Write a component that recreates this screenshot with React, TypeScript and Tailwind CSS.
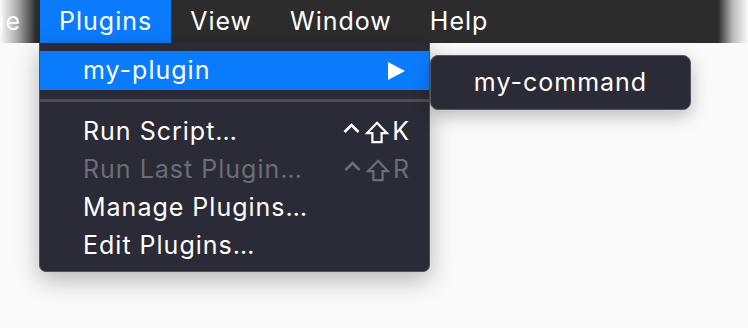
import React from 'react';

const font = { fontFamily: 'Inter, "Noto Sans", "DejaVu Sans", sans-serif' };

// control + shift modifier symbols, then the key letter
const Shortcut = ({ keyName }: { keyName: string }) => (
  <span className="flex items-center tracking-normal">
    <svg width="17" height="10" viewBox="0 0 17 10" className="mb-[9px] mr-[5px]">
      <path d="M1.5 9 L8.5 2 L15.5 9" fill="none" stroke="currentColor" strokeWidth="2.6" />
    </svg>
    <svg width="24" height="23" viewBox="0 0 24 23" className="mr-[3px]">
      <path d="M12 1.8 L22 12.2 H16.6 V21.2 H7.4 V12.2 H2 Z" fill="none" stroke="currentColor" strokeWidth="2.2" strokeLinejoin="miter" />
    </svg>
    <span>{keyName}</span>
  </span>
);

const MenuItem = ({ label, shortcut, disabled }: { label: string; shortcut?: string; disabled?: boolean }) => (
  <div
    className={`flex h-[38px] items-center justify-between pl-[43px] pr-[20px] ${
      disabled ? 'text-[#6c6d75]' : 'text-white'
    }`}
  >
    <span>{label}</span>
    {shortcut && <Shortcut keyName={shortcut} />}
  </div>
);

export default function App() {
  return (
    <div className="relative h-[328px] w-[748px] overflow-hidden bg-[#fafafa] text-[25px] tracking-[1px]" style={font}>
      {/* menu bar */}
      <div className="relative flex h-[43px] items-center bg-[#2c2c2c] text-white">
        <div className="flex h-full w-[40px] items-center justify-end pr-[19px]">
          <span>ge</span>
        </div>
        <div className="flex h-full items-center bg-[#0b7bfd] px-[19px]">Plugins</div>
        <div className="px-[19px]">View</div>
        <div className="px-[19px]">Window</div>
        <div className="px-[19px]">Help</div>
        <div className="absolute inset-y-0 left-0 w-[36px] bg-gradient-to-r from-[#fafafa] via-[#fafafa]/60 to-transparent" />
        <div className="absolute inset-y-0 right-0 w-[30px] bg-gradient-to-l from-[#fafafa] via-[#fafafa]/70 to-transparent" />
      </div>

      {/* dropdown */}
      <div className="absolute left-[39px] top-[43px] w-[391px] rounded-b-[7px] border border-t-0 border-[#51525a] bg-[#2a2b36] pb-[6px] pt-[8px] shadow-[0_8px_24px_rgba(0,0,0,0.28)]">
        <div className="flex h-[39px] items-center justify-between bg-[#0b7bfd] pl-[43px] pr-[24px] text-white">
          <span>my-plugin</span>
          <svg width="17" height="18" viewBox="0 0 17 18">
            <path d="M0 0 L17 9 L0 18 Z" fill="white" />
          </svg>
        </div>
        <div className="pb-[11px] pt-[9px]">
          <div className="h-[3px] bg-[#4b4c55]" />
        </div>
        <MenuItem label="Run Script…" shortcut="K" />
        <MenuItem label="Run Last Plugin…" shortcut="R" disabled />
        <MenuItem label="Manage Plugins…" />
        <MenuItem label="Edit Plugins…" />
      </div>

      {/* submenu */}
      <div className="absolute left-[430px] top-[55px] flex h-[55px] w-[261px] items-center justify-center rounded-[8px] border border-[#55565e] bg-[#2a2b36] text-white shadow-[0_6px_18px_rgba(0,0,0,0.25)]">
        my-command
      </div>
    </div>
  );
}
